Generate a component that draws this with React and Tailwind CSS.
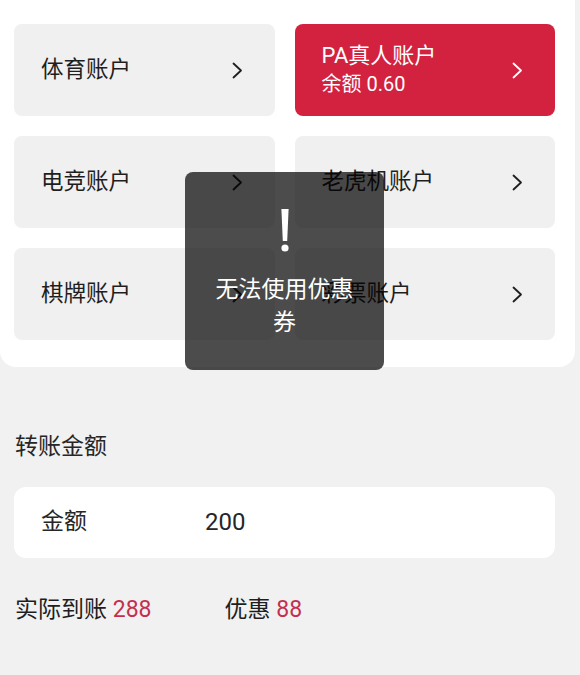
import { useState } from "react";

const accounts = [
  { name: "体育账户" },
  { name: "PA真人账户", balance: "0.60", active: true },
  { name: "电竞账户" },
  { name: "老虎机账户" },
  { name: "棋牌账户" },
  { name: "彩票账户" },
];

function Chevron({ className }) {
  return (
    <svg width="11" height="17" viewBox="0 0 11 17" className={className}>
      <polyline
        points="1.5,1.5 9,8.5 1.5,15.5"
        fill="none"
        stroke="currentColor"
        strokeWidth="1.8"
        strokeLinecap="round"
        strokeLinejoin="round"
      />
    </svg>
  );
}

function AccountCard({ account }) {
  const { name, balance, active } = account;
  return (
    <div
      className={
        active
          ? "h-[92px] rounded-lg bg-[#d22240] text-white flex items-center justify-between pl-[27px] pr-[32px]"
          : "h-[92px] rounded-lg bg-[#f0f0f0] text-[#1e1e1e] flex items-center justify-between pl-[27px] pr-[32px]"
      }
    >
      <div className={active ? "flex flex-col pb-[1px]" : "flex flex-col pb-[2px]"}>
        <span className={active ? "text-[22px] leading-[28px]" : "text-[22.5px] leading-[30px]"}>{name}</span>
        {balance && <span className="text-[20px] leading-[28px]">余额 {balance}</span>}
      </div>
      <Chevron className={active ? "text-white" : "text-[#1e1e1e]"} />
    </div>
  );
}

// the little "!" drawn above the toast message
function Bang() {
  return (
    <svg width="12" height="46" viewBox="0 0 12 46">
      <path d="M2.4 1 L9.6 1 L8.2 33 L3.8 33 Z" fill="white" />
      <circle cx="6" cy="40" r="3.6" fill="white" />
    </svg>
  );
}

export default function App() {
  const [amount] = useState("200");

  return (
    <div
      className="relative h-[675px] overflow-hidden bg-[#f1f1f1]"
      style={{ fontFamily: 'Roboto, "Noto Sans CJK SC", "Noto Sans", sans-serif' }}
    >
      <div className="bg-white w-[575px] rounded-b-2xl pl-[14px] pr-[20px] pt-[24px] pb-[27px]">
        <div className="grid grid-cols-2 gap-x-[20px] gap-y-[20px]">
          {accounts.map((a) => (
            <AccountCard key={a.name} account={a} />
          ))}
        </div>
      </div>

      <div className="px-[14px]">
        <div className="mt-[65px] pl-[1px] text-[23px] leading-[30px] text-[#262626]">转账金额</div>

        <div className="mt-[25px] h-[71px] w-[541px] rounded-xl bg-white flex items-center pl-[27px] pb-[1px] text-[23px] text-[#262626]">
          <span className="w-[164px]">金额</span>
          <span className="text-[24px]">{amount}</span>
        </div>

        <div className="mt-[37px] pl-[1px] flex items-center text-[23px] leading-[30px] text-[#1e1e1e]">
          <span>
            实际到账 <span className="text-[#c3304f]">288</span>
          </span>
          <span className="ml-[73px]">
            优惠 <span className="text-[#c3304f]">88</span>
          </span>
        </div>
      </div>

      {/* toast */}
      <div className="absolute left-[185px] top-[172px] w-[199px] h-[198px] rounded-lg bg-black/70 flex flex-col items-center pt-[36px] px-6">
        <Bang />
        <div className="mt-[19px] text-center text-white text-[23px] leading-[33px]">无法使用优惠券</div>
      </div>
    </div>
  );
}
